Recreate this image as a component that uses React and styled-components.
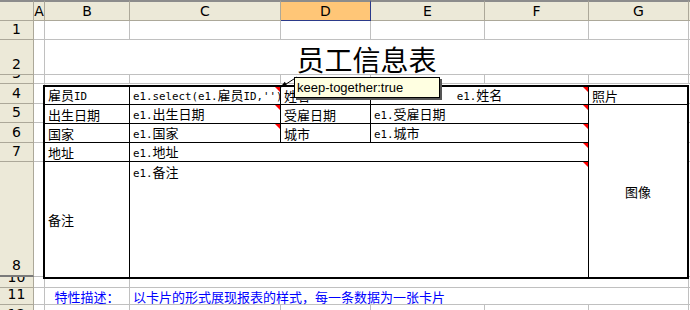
import React from "react"
import styled, { createGlobalStyle } from "styled-components"

const GlobalStyle = createGlobalStyle`
  html, body {
    margin: 0;
    padding: 0;
    background: #fff;
    overflow: hidden;
  }
`

const gridLine = "#c0c0c0"
const headBg = "#ece9d8"
const headLine = "#aca899"

const Sheet = styled.div`
  position: relative;
  width: 690px;
  height: 310px;
  overflow: hidden;
  display: grid;
  grid-template-columns: 34px 11px 85px 151px 90px 114px 104px 100px 64px;
  grid-template-rows: 21px 19px 35px 9px 20px 19px 20px 19px 115px 11px 17px 20px;
  font-family: "Noto Sans CJK SC", sans-serif;
  background: #fff;
`

const ColHead = styled.div`
  box-sizing: border-box;
  background: ${p => (p.$active ? "#ffc677" : headBg)};
  border-top: 2px solid #8c8c8c;
  border-bottom: 1px solid ${p => (p.$active ? "#2b3a8a" : headLine)};
  border-right: 1px solid ${p => (p.$active ? "#2b3a8a" : headLine)};
  display: flex;
  align-items: center;
  justify-content: center;
  font: 14px/16px "DejaVu Sans", sans-serif;
  color: #000;
  overflow: hidden;
`

const RowHead = styled.div`
  box-sizing: border-box;
  background: ${headBg};
  border-right: 1px solid ${headLine};
  border-bottom: ${p => (p.$hidden ? "2px solid #7a7a7a" : `1px solid ${headLine}`)};
  display: flex;
  align-items: flex-end;
  justify-content: center;
  overflow: hidden;
  padding-bottom: 1px;
  font: 14px/17px "DejaVu Sans", sans-serif;
  color: #000;
`

const Cell = styled.div`
  box-sizing: border-box;
  grid-column: ${p => (p.$span ? `span ${p.$span}` : "auto")};
  border-right: 1px solid ${gridLine};
  border-bottom: 1px solid ${gridLine};
  min-width: 0;
`

const Title = styled(Cell)`
  display: flex;
  align-items: flex-end;
  justify-content: center;
  font-size: 28px;
  line-height: 28px;
  padding-bottom: 1px;
  color: #000;
`

const Note = styled(Cell)`
  display: flex;
  align-items: center;
  justify-content: ${p => (p.$center ? "center" : "flex-start")};
  padding-left: ${p => (p.$center ? "0" : "3px")};
  color: #0000ff;
  font-size: 13px;
  white-space: nowrap;
`

const Table = styled.div`
  grid-column: 3 / 9;
  grid-row: 5 / 10;
  margin: 1px 0 -2px -2px;
  border: 2px solid #000;
  display: grid;
  grid-template-columns: 85px 151px 90px 114px 104px 1fr;
  grid-template-rows: 18px 19px 19px 19px 1fr;
  background: #fff;
  position: relative;
  z-index: 1;
`

const TCell = styled.div`
  position: relative;
  box-sizing: border-box;
  min-width: 0;
  grid-column: ${p => (p.$span ? `span ${p.$span}` : "auto")};
  grid-row: ${p => (p.$rows ? `span ${p.$rows}` : "auto")};
  border-right: ${p => (p.$last ? "none" : "1px solid #000")};
  border-bottom: ${p => (p.$bottom ? "none" : "1px solid #000")};
  display: flex;
  align-items: ${p => (p.$top ? "flex-start" : "center")};
  justify-content: ${p => (p.$center ? "center" : "flex-start")};
  padding: ${p => (p.$top ? "2px 3px" : "0 3px")};
  font-size: 13px;
  line-height: 15px;
  color: #000;
  white-space: nowrap;
  overflow: hidden;
`

const Mark = styled.span`
  position: absolute;
  top: 0;
  right: 0;
  width: 0;
  height: 0;
  border-left: 5px solid transparent;
  border-top: 5px solid #ff0000;
`

const Code = styled.span`
  font-family: "DejaVu Sans Mono", monospace;
  font-size: 10.8px;
`

const Tip = styled.div`
  position: absolute;
  left: 294px;
  top: 77px;
  width: 146px;
  height: 21px;
  box-sizing: border-box;
  background: #ffffe1;
  border: 1px solid #000;
  box-shadow: 2px 2px 0 #555;
  padding-left: 2px;
  font: 13px/19px "Liberation Sans", sans-serif;
  color: #000;
  z-index: 3;
`

const Arrow = styled.svg`
  position: absolute;
  left: 277px;
  top: 72px;
  z-index: 3;
`

function Txt({ children }) {
  const parts = String(children).split(/([\x00-\x7f]+)/).filter(Boolean)
  return (
    <span>
      {parts.map((s, i) =>
        /^[\x00-\x7f]+$/.test(s) ? <Code key={i}>{s}</Code> : <React.Fragment key={i}>{s}</React.Fragment>
      )}
    </span>
  )
}

const letters = ["A", "B", "C", "D", "E", "F", "G", "H"]
const blank = n => Array.from({ length: n }, (_, i) => <Cell key={i} />)

export default function App() {
  return (
    <>
      <GlobalStyle />
      <Sheet>
        <ColHead />
        {letters.map(l => (
          <ColHead key={l} $active={l === "D"}>{l}</ColHead>
        ))}

        <RowHead>1</RowHead>
        {blank(8)}

        <RowHead>2</RowHead>
        <Cell />
        <Title $span={6}>员工信息表</Title>
        <Cell />

        <RowHead>3</RowHead>
        {blank(8)}

        {[4, 5, 6, 7, 8].map(n => (
          <React.Fragment key={n}>
            <RowHead $hidden={n === 8}>{n}</RowHead>
            <Cell />
            <Cell />
          </React.Fragment>
        ))}

        <Table>
          <TCell><Txt>雇员ID</Txt></TCell>
          <TCell><Txt>{"e1.select(e1.雇员ID,'')"}</Txt><Mark /></TCell>
          <TCell><Txt>姓名</Txt></TCell>
          <TCell $span={2} $center><Txt>e1.姓名</Txt><Mark /></TCell>
          <TCell $last><Txt>照片</Txt></TCell>

          <TCell><Txt>出生日期</Txt></TCell>
          <TCell><Txt>e1.出生日期</Txt><Mark /></TCell>
          <TCell><Txt>受雇日期</Txt></TCell>
          <TCell $span={2}><Txt>e1.受雇日期</Txt><Mark /></TCell>
          <TCell $rows={4} $last $bottom $center><Txt>图像</Txt></TCell>

          <TCell><Txt>国家</Txt></TCell>
          <TCell><Txt>e1.国家</Txt><Mark /></TCell>
          <TCell><Txt>城市</Txt></TCell>
          <TCell $span={2}><Txt>e1.城市</Txt><Mark /></TCell>

          <TCell><Txt>地址</Txt></TCell>
          <TCell $span={4}><Txt>e1.地址</Txt><Mark /></TCell>

          <TCell $bottom><Txt>备注</Txt></TCell>
          <TCell $span={4} $bottom $top><Txt>e1.备注</Txt><Mark /></TCell>
        </Table>

        <RowHead>10</RowHead>
        <Cell />
        <Cell />
        <Cell $span={5} />
        <Cell />

        <RowHead>11</RowHead>
        <Cell />
        <Note $center>特性描述：</Note>
        <Note $span={5}>以卡片的形式展现报表的样式，每一条数据为一张卡片</Note>
        <Cell />

        <RowHead>12</RowHead>
        {blank(8)}

        <Arrow width="24" height="18" viewBox="0 0 24 18">
          <line x1="20" y1="5" x2="6" y2="14" stroke="#000" strokeWidth="1" />
          <polygon points="3,15.5 10.4,13.9 7.8,9.7" fill="#000" />
        </Arrow>
        <Tip>keep-together:true</Tip>
      </Sheet>
    </>
  )
}
